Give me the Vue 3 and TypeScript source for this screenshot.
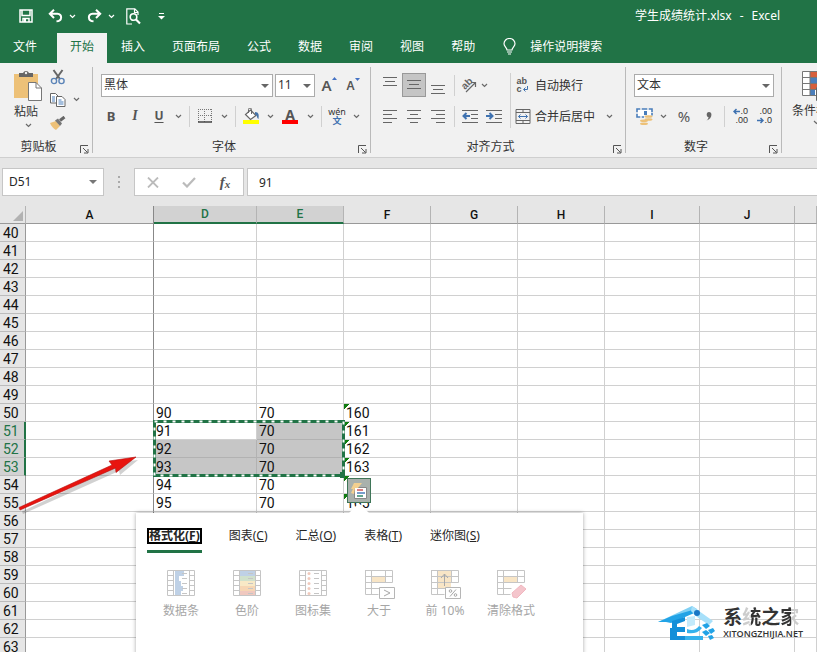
<script setup lang="ts">
import { computed, onBeforeUnmount, onMounted, ref } from 'vue'

interface Column {
  name: string
  width?: number
}

const tabs = ['文件', '开始', '插入', '页面布局', '公式', '数据', '审阅', '视图', '帮助']
const activeTab = ref('开始')

const columns: Column[] = [
  { name: 'A', width: 128 },
  { name: 'D', width: 103 },
  { name: 'E', width: 87 },
  { name: 'F', width: 87 },
  { name: 'G', width: 87 },
  { name: 'H', width: 87 },
  { name: 'I', width: 95 },
  { name: 'J', width: 95 },
  { name: '' },
]

// Only the rows that fit below the header are rendered.
const HEADER_BOTTOM = 224
const ROW_HEIGHT = 18
const viewport = ref(window.innerHeight)
const rows = computed(() =>
  Array.from({ length: Math.max(1, Math.ceil((viewport.value - HEADER_BOTTOM) / ROW_HEIGHT)) }, (_, i) => i + 40),
)
const onResize = () => {
  viewport.value = window.innerHeight
}
onMounted(() => window.addEventListener('resize', onResize))
onBeforeUnmount(() => window.removeEventListener('resize', onResize))

const fontName = ref('黑体')
const fontSize = ref('11')
const numberFormat = ref('文本')
const nameBox = ref('D51')
const formula = ref('91')

const isSelectedCol = (c: string) => c === 'D' || c === 'E'
const isSelectedRow = (r: number) => r >= 51 && r <= 53
const hasData = (r: number) => r >= 50 && r <= 55

function cellText(r: number, c: string): string {
  if (!hasData(r)) return ''
  if (c === 'D') return String(r + 40)
  if (c === 'E') return '70'
  if (c === 'F') return String(r + 110)
  return ''
}

function cellClass(r: number, c: string) {
  return {
    frozen: c === 'A',
    picked: isSelectedRow(r) && isSelectedCol(c) && !(r === 51 && c === 'D'),
    flagged: c === 'F' && hasData(r),
    anchor: r === 51 && c === 'D',
  }
}

const analysisTabs = [
  { text: '格式化', key: 'F' },
  { text: '图表', key: 'C' },
  { text: '汇总', key: 'O' },
  { text: '表格', key: 'T' },
  { text: '迷你图', key: 'S' },
]
const activeAnalysis = ref('F')

const analysisItems = ['数据条', '色阶', '图标集', '大于', '前 10%', '清除格式']
const barWidths = [9, 4, 6, 8, 6]
const scaleColors = ['#b4c9e2', '#c8dcc4', '#f7e6bd', '#f5d0a8', '#eebfb4']
</script>

<template>
  <div class="app">
    <svg class="defs" aria-hidden="true">
      <symbol id="chev" viewBox="0 0 7 5"><path d="M1 1l2.500 2.500L6 1" fill="none" stroke="currentColor" stroke-width="1.200" /></symbol>
      <symbol id="tri" viewBox="0 0 8 4"><path d="M0 0h8L4 4z" fill="currentColor" /></symbol>
      <symbol id="launch" viewBox="0 0 9 9">
        <path d="M.5 8V.5H8M3 3l4.500 4.500M8 4v4H4" fill="none" stroke="#555" />
      </symbol>
    </svg>

    <header class="titlebar">
      <div class="qat">
        <button class="q" aria-label="保存">
          <svg width="14" height="14" viewBox="0 0 14 14" fill="none" stroke="#fff" stroke-width="1.500">
            <path d="M1 1h12v12H1zM3 1v5.500h8V1M4 13V9.500h6V13" /><path d="M6 10v3" stroke-width="2" />
          </svg>
        </button>
        <button class="q undo" aria-label="撤消">
          <svg width="15" height="14" viewBox="0 0 15 14" fill="none" stroke="#fff" stroke-width="2">
            <path d="M6 .8L1.800 4.800 6 9M2 4.800h7.500c5 0 5 7.500-1 7.500" />
          </svg>
        </button>
        <button class="c" aria-label="撤消列表"><svg width="7" height="5"><use href="#chev" /></svg></button>
        <button class="q redo" aria-label="恢复">
          <svg width="15" height="14" viewBox="0 0 15 14" fill="none" stroke="#fff" stroke-width="2">
            <path d="M9 .8l4.200 4L9 9M13 4.800H5.500c-5 0-5 7.500 1 7.500" />
          </svg>
        </button>
        <button class="c" aria-label="恢复列表"><svg width="7" height="5"><use href="#chev" /></svg></button>
        <button class="q preview" aria-label="打印预览">
          <svg width="15" height="17" viewBox="0 0 15 17" fill="none" stroke="#fff">
            <path d="M6 16H.8V.8h8l3.200 3.200v3M8.500 1v3.500H12" stroke-width="1.200" />
            <circle cx="7.500" cy="9" r="3.300" stroke-width="1.600" /><path d="M10 11.500l4 4" stroke-width="2.200" />
          </svg>
        </button>
        <button class="q more" aria-label="自定义快速访问工具栏">
          <svg width="7" height="7" viewBox="0 0 7 7"><path d="M1 .5h5" stroke="#fff" /><path d="M0 3h7L3.500 6.500z" fill="#fff" /></svg>
        </button>
      </div>
      <div class="title"><span>学生成绩统计.xlsx</span><span>-</span><span>Excel</span></div>
    </header>

    <nav class="tabs">
      <button v-for="t in tabs" :key="t" class="tab" :class="{ on: t === activeTab, file: t === '文件' }" @click="activeTab = t">{{ t }}</button>
      <button class="tell">
        <svg width="13" height="17" viewBox="0 0 13 17" fill="none" stroke="#fff" stroke-width="1.200">
          <path d="M4 12c0-2.500-3-3.500-3-6.300a5.500 5.200 0 0 1 11 0C12 8.500 9 9.500 9 12zM4 14h5M5 16h3" />
        </svg>
        操作说明搜索
      </button>
    </nav>

    <section class="ribbon">
      <div class="group clip">
        <div class="clip-body">
          <button class="paste">
            <svg width="28" height="31" viewBox="0 0 28 31">
              <path d="M0 4h24v24H0z" fill="#edc178" />
              <path d="M5 7V3h4a3.200 3.200 0 0 1 6 0h4v4z" fill="#666" /><circle cx="12" cy="3" r="1.200" fill="#f1f1f1" />
              <path d="M14.500 12.500H22l5.500 5.500v12.500h-13z" fill="#fff" stroke="#777" /><path d="M22 12.500V18h5.500" fill="none" stroke="#777" />
            </svg>
            <span>粘贴</span>
            <svg class="dim" width="7" height="5"><use href="#chev" /></svg>
          </button>
          <div class="clip-side">
            <button aria-label="剪切">
              <svg width="16" height="16" viewBox="0 0 16 16" fill="none">
                <path d="M3.500 1l6.500 9M12.500 1L6 10" stroke="#666" stroke-width="2" />
                <circle cx="4" cy="12" r="2.600" stroke="#5a83b7" stroke-width="1.400" /><circle cx="11.500" cy="12" r="2.600" stroke="#5a83b7" stroke-width="1.400" />
              </svg>
            </button>
            <button aria-label="复制">
              <svg width="16" height="14" viewBox="0 0 16 14" fill="#fff" stroke="#666">
                <path d="M.5.5h5l3 3v6.500h-8z" /><path d="M6.500 3.500h5.500l3 3v7H6.500z" />
                <path d="M2 4h3M2 6h3M2 8h3M8.500 7h3M8.500 9h5M8.500 11h5" stroke="#4a7ebb" />
              </svg>
              <svg class="dim gapchev" width="7" height="5"><use href="#chev" /></svg>
            </button>
            <button aria-label="格式刷">
              <svg width="16" height="14" viewBox="0 0 16 14">
                <path d="M0 7l6-2 4 5-4 4C4 13 1 10 0 7z" fill="#edc178" /><path d="M5 4.500l3-2 4 5-2 2.500z" fill="#777" /><path d="M10 4.500L14.500 1" stroke="#666" stroke-width="3" />
              </svg>
            </button>
          </div>
        </div>
        <div class="glabel"><span>剪贴板</span><button aria-label="剪贴板选项"><svg width="9" height="9"><use href="#launch" /></svg></button></div>
      </div>

      <div class="group font">
        <div class="row">
          <label class="combo face"><select v-model="fontName" aria-label="字体"><option>黑体</option></select><svg width="8" height="4"><use href="#tri" /></svg></label>
          <label class="combo size"><select v-model="fontSize" aria-label="字号"><option>11</option></select><svg width="8" height="4"><use href="#tri" /></svg></label>
          <button class="b24 glyph grow" aria-label="增大字号">A<svg width="5" height="3" viewBox="0 0 5 3"><path d="M0 3h5L2.500 0z" fill="#4472c4" /></svg></button>
          <button class="b24 glyph shrink" aria-label="减小字号">A<svg width="5" height="3" viewBox="0 0 5 3"><path d="M0 0h5L2.500 3z" fill="#4472c4" /></svg></button>
        </div>
        <div class="row pull">
          <button class="b24 glyph bold">B</button>
          <button class="b24 glyph ital">I</button>
          <button class="b24 glyph under">U</button>
          <button class="c" aria-label="下划线样式"><svg width="7" height="5"><use href="#chev" /></svg></button>
          <i class="sep"></i>
          <button class="b24" aria-label="边框">
            <svg width="14" height="14" viewBox="0 0 14 14" fill="none" stroke="#777">
              <path d="M0 .5h14M.5 0v13M6.500 0v13M13.500 0v13M0 6.500h14" stroke-dasharray="1 1" /><path d="M0 13h14" stroke="#444" stroke-width="1.500" />
            </svg>
          </button>
          <button class="c" aria-label="边框样式"><svg width="7" height="5"><use href="#chev" /></svg></button>
          <i class="sep"></i>
          <button class="b24" aria-label="填充颜色">
            <svg width="17" height="16" viewBox="0 0 17 16">
              <path d="M0 12h16v4H0z" fill="#ff0" /><path d="M7.500 2L13 7.500 7.500 11.500 2.500 6.500z" fill="#fff" stroke="#666" stroke-width="1.200" />
              <path d="M5.500 5V1.500a1.500 1.500 0 0 1 3 0V6" fill="none" stroke="#666" /><path d="M12 4c4 0 4 3 3.500 7-2-1-1-4-3.500-4.500z" fill="#4472a8" />
            </svg>
          </button>
          <button class="c" aria-label="更多填充颜色"><svg width="7" height="5"><use href="#chev" /></svg></button>
          <button class="glyph fcolor" aria-label="字体颜色">A</button>
          <button class="c" aria-label="更多字体颜色"><svg width="7" height="5"><use href="#chev" /></svg></button>
          <i class="sep"></i>
          <button class="b24 wen"><span>wén</span><b>文</b></button>
          <button class="c" aria-label="拼音选项"><svg width="7" height="5"><use href="#chev" /></svg></button>
        </div>
        <div class="glabel"><span>字体</span><button aria-label="字体设置"><svg width="9" height="9"><use href="#launch" /></svg></button></div>
      </div>

      <div class="group align">
        <div class="align-body">
          <div class="stack">
            <div class="row">
              <button class="b24" aria-label="顶端对齐"><svg width="16" height="18" viewBox="0 0 16 18" stroke="#666"><path d="M1 1.500h14M3 5.500h10M1 9.500h14" /></svg></button>
              <button class="b24 pressed" aria-label="垂直居中"><svg width="16" height="18" viewBox="0 0 16 18" stroke="#666"><path d="M1 4.500h14M3 8.500h10M1 12.500h14" /></svg></button>
              <button class="b24" aria-label="底端对齐"><svg width="16" height="18" viewBox="0 0 16 18" stroke="#666"><path d="M1 9.500h14M3 13.500h10M1 17.500h14" /></svg></button>
              <i class="sep"></i>
              <button class="orient" aria-label="方向">
                <svg width="20" height="20" viewBox="0 0 20 20"><text x="0" y="0" transform="translate(7 15) rotate(-45)" font-size="10" font-weight="bold" fill="#666" font-family="Liberation Sans, sans-serif">ab</text><path d="M8 17l9-9M13 7.500h4.500V12" fill="none" stroke="#666" stroke-width="1.200" /></svg>
                <svg class="dim" width="7" height="5"><use href="#chev" /></svg>
              </button>
            </div>
            <div class="row">
              <button class="b24" aria-label="左对齐"><svg width="16" height="14" viewBox="0 0 16 14" stroke="#666"><path d="M1 1.500h14M1 5.500h9M1 9.500h14M1 13.500h9" /></svg></button>
              <button class="b24" aria-label="居中"><svg width="16" height="14" viewBox="0 0 16 14" stroke="#666"><path d="M1 1.500h14M4 5.500h8M1 9.500h14M4 13.500h8" /></svg></button>
              <button class="b24" aria-label="右对齐"><svg width="16" height="14" viewBox="0 0 16 14" stroke="#666"><path d="M1 1.500h14M6 5.500h9M1 9.500h14M6 13.500h9" /></svg></button>
              <i class="sep"></i>
              <button class="b24" aria-label="减少缩进"><svg width="16" height="14" viewBox="0 0 16 14" stroke="#666"><path d="M0 1.500h16M9 5.500h7M9 9.500h7M0 13.500h16" /><path d="M8 7H1.500M4.500 4l-3 3 3 3" fill="none" stroke="#3f72b0" stroke-width="2" /></svg></button>
              <button class="b24" aria-label="增加缩进"><svg width="16" height="14" viewBox="0 0 16 14" stroke="#666"><path d="M0 1.500h16M9 5.500h7M9 9.500h7M0 13.500h16" /><path d="M0 7h6.500M3.500 4l3 3-3 3" fill="none" stroke="#3f72b0" stroke-width="2" /></svg></button>
            </div>
          </div>
          <i class="sep tall"></i>
          <div class="stack">
            <button class="wide">
              <svg width="16" height="20" viewBox="0 0 16 20"><text x="2" y="9" font-size="9" font-weight="bold" fill="#555" font-family="Liberation Sans, sans-serif">ab</text><text x="2" y="17" font-size="9" font-weight="bold" fill="#555" font-family="Liberation Sans, sans-serif">c</text><path d="M13 11v3.500H9.500M11 12.500l-2 2 2 2" fill="none" stroke="#3f72b0" /></svg>
              <span>自动换行</span>
            </button>
            <button class="wide">
              <svg width="16" height="15" viewBox="0 0 16 15" fill="none" stroke="#666"><path d="M1.500.500h14v14h-14zM1.500 3.500h14M1.500 11.500h14M8.500.5v3M8.500 11.500v3" /><path d="M4 7.500h9M6 5.500l-2 2 2 2M11 5.500l2 2-2 2" stroke="#3f72b0" /></svg>
              <span>合并后居中</span>
              <svg class="dim end" width="7" height="5"><use href="#chev" /></svg>
            </button>
          </div>
        </div>
        <div class="glabel"><span>对齐方式</span><button aria-label="对齐设置"><svg width="9" height="9"><use href="#launch" /></svg></button></div>
      </div>

      <div class="group number">
        <div class="row">
          <label class="combo numfmt"><select v-model="numberFormat" aria-label="数字格式"><option>文本</option></select><svg width="8" height="4"><use href="#tri" /></svg></label>
        </div>
        <div class="row">
          <button class="money" aria-label="会计数字格式">
            <svg width="18" height="17" viewBox="0 0 18 17">
              <path d="M1 1h15v8H1z" fill="#fff" stroke="#4a7ebb" stroke-width="1.600" /><path d="M8 3h3v4H8z" fill="#4a7ebb" />
              <path d="M4 1h2M11 1h2M4 9h2M1 4v2M16 4v1" stroke="#f1f1f1" stroke-width="1.600" />
              <path d="M8 7.500h9V13h-5v4H4v-6h4z" fill="#f1f1f1" />
              <ellipse cx="12.500" cy="8.500" rx="4" ry="1.300" fill="#edc178" /><ellipse cx="12.500" cy="11.500" rx="4" ry="1.300" fill="#edc178" /><ellipse cx="8" cy="12.800" rx="4" ry="1.300" fill="#edc178" /><ellipse cx="8" cy="15.700" rx="4" ry="1.300" fill="#edc178" />
            </svg>
          </button>
          <button class="c" aria-label="货币"><svg width="7" height="5"><use href="#chev" /></svg></button>
          <button class="b24 glyph pct">%</button>
          <button class="b24 comma" aria-label="千位分隔样式"><svg width="6" height="9" viewBox="0 0 6 9"><path d="M3 0c4 0 3 7-2.500 8.500C2 7.500 2.500 6 2.500 5 0 5 0 0 3 0z" fill="#666" /></svg></button>
          <i class="sep"></i>
          <button class="dec" aria-label="增加小数位数"><span><svg width="7" height="7" viewBox="0 0 7 7"><path d="M7 3.500H1M3.500 1L1 3.500 3.500 6" fill="none" stroke="#3f72b0" stroke-width="1.500" /></svg>.0</span><span>.00</span></button>
          <button class="dec" aria-label="减少小数位数"><span>.00</span><span><svg width="7" height="7" viewBox="0 0 7 7"><path d="M0 3.500h6M3.500 1L6 3.500 3.500 6" fill="none" stroke="#3f72b0" stroke-width="1.500" /></svg>.0</span></button>
        </div>
        <div class="glabel"><span>数字</span><button aria-label="数字设置"><svg width="9" height="9"><use href="#launch" /></svg></button></div>
      </div>

      <div class="group styles">
        <button class="cond">
          <svg width="28" height="31" viewBox="0 0 28 31">
            <path d="M.5.500h27v24H.5z" fill="#fff" /><path d="M8 0h12v6H8zM8 12h14v6H8z" fill="#d65f3c" /><path d="M8 6h16v6H8zM8 18h5v6H8z" fill="#4a7ebb" />
            <path d="M.5.500h27v24H.5zM8 0v24M.5 6.500h27M.5 12.500h27M.5 18.500h27" fill="none" stroke="#777" />
            <path d="M14.500 16.500h13v13h-13z" fill="#fff" stroke="#666" />
          </svg>
          <span>条件格式</span>
          <svg class="dim" width="7" height="5"><use href="#chev" /></svg>
        </button>
      </div>
    </section>

    <section class="fbar">
      <div class="namebox">
        <input v-model="nameBox" aria-label="名称框" />
        <button aria-label="名称列表"><svg width="8" height="4"><use href="#tri" /></svg></button>
      </div>
      <svg class="grip" width="2" height="12" viewBox="0 0 2 12" fill="#aaa"><path d="M0 0h2v2H0zM0 5h2v2H0zM0 10h2v2H0z" /></svg>
      <div class="fbuttons">
        <button aria-label="取消"><svg width="12" height="11" viewBox="0 0 12 11"><path d="M1 .5l10 10M11 .5l-10 10" stroke="#bbb" stroke-width="1.800" /></svg></button>
        <button aria-label="输入"><svg width="14" height="11" viewBox="0 0 14 11"><path d="M1 5.500l4 4L13 1" fill="none" stroke="#bbb" stroke-width="2.200" /></svg></button>
        <button class="fx" aria-label="插入函数">f<small>x</small></button>
      </div>
      <input v-model="formula" class="formula" aria-label="编辑栏" />
    </section>

    <main class="sheet">
      <table>
        <colgroup>
          <col class="rowcol" />
          <col v-for="(c, i) in columns" :key="i" :style="c.width ? { width: c.width + 'px' } : undefined" />
        </colgroup>
        <thead>
          <tr>
            <th class="corner"><svg width="10" height="10" viewBox="0 0 10 10"><path d="M10 0v10H0z" fill="#b2b2b2" /></svg></th>
            <th v-for="(c, i) in columns" :key="i" :class="{ sel: isSelectedCol(c.name), frozen: c.name === 'A' }">{{ c.name }}</th>
          </tr>
        </thead>
        <tbody>
          <tr v-for="r in rows" :key="r">
            <th :class="{ sel: isSelectedRow(r) }">{{ r }}</th>
            <td v-for="(c, i) in columns" :key="i" :class="cellClass(r, c.name)">
              {{ cellText(r, c.name) }}
              <svg v-if="r === 51 && c.name === 'D'" class="ants" width="192" height="58" viewBox="0 0 192 58" fill="none">
                <path d="M1.500 1.500h189v54h-189z" stroke="#217346" stroke-width="3" />
                <path d="M1.500 1.500h189v54h-189z" stroke="#fff" stroke-width="2" stroke-dasharray="3 6" />
                <path d="M187 52h5v6h-5z" fill="#217346" />
              </svg>
            </td>
          </tr>
        </tbody>
      </table>

      <svg class="arrow" width="124" height="66" viewBox="0 0 124 66">
        <g transform="translate(3 3)" fill="#000"><path d="M1 52.500L94 8l-3-4 26-3-18 15-1-4L2 55z" opacity=".18" /></g>
        <path d="M1 51.500L94 9l-3-4 27-4L98 16.500l-.5-4.500L2 54z" fill="#e8140f" stroke="#b30d0d" stroke-width=".6" />
      </svg>

      <section class="popup">
        <svg class="callout" width="22" height="10" viewBox="0 0 22 10"><path d="M0 10L9 1q2-2 4 0l9 9z" fill="#fff" /></svg>
        <div class="ptabs">
          <button v-for="t in analysisTabs" :key="t.key" :class="{ on: t.key === activeAnalysis }" @click="activeAnalysis = t.key">
            <span>{{ t.text }}(<u>{{ t.key }}</u>)</span>
          </button>
        </div>
        <div class="pitems">
          <button v-for="(item, k) in analysisItems" :key="item">
            <svg width="32" height="32" viewBox="0 0 32 32" fill="none" stroke="#bcbcbc">
              <template v-if="k < 3">
                <template v-if="k === 0"><path v-for="(w, n) in barWidths" :key="n" :d="`M10 ${4 + n * 5}h${w}v5h-${w}z`" fill="#b4c9e2" stroke="none" /></template>
                <template v-if="k === 1"><path v-for="(s, n) in scaleColors" :key="n" :d="`M9 ${4 + n * 5}h15v5h-15z`" :fill="s" stroke="none" /></template>
                <template v-if="k === 2"><circle v-for="n in 5" :key="n" cx="12" :cy="1.500 + n * 5" r="1.500" fill="#eec0b0" stroke="none" /></template>
                <path d="M2.500 3.500h27v25h-27zM8.500 3.500v25M24.500 3.500v25" />
                <path d="M2.500 8.500h6M2.500 13.500h6M2.500 18.500h6M2.500 23.500h6M24.500 8.500h5M24.500 13.500h5M24.500 18.500h5M24.500 23.500h5M17 6.500h5M17 11.500h5M17 16.500h5M17 21.500h5M17 26.500h5" />
              </template>
              <template v-else>
                <path v-if="k === 4" d="M9 3h13v19H9z" fill="#f7e1bd" stroke="none" />
                <path v-else d="M9 9h13v7H9z" fill="#f7e1bd" stroke="none" />
                <path d="M2.500 3.500h27v12M2.500 3v24.500h13M2.500 9.500h27M2.500 15.500h27M2.500 21.500h14M8.500 3.500v24M22.500 3.500v12" />
                <path v-if="k < 5" d="M16.500 20.500h15v11h-15z" fill="#fff" stroke="#aaa" />
                <path v-if="k === 3" d="M21 23l6 3-6 3" stroke="#999" />
                <g v-if="k === 4" stroke="#999"><path d="M15.500 19V7M12 11l3.500-4 3.500 4" /><circle cx="21.500" cy="24" r="1.300" /><circle cx="26.500" cy="28" r="1.300" /><path d="M27 22.500l-6 7" /></g>
                <path v-if="k === 5" d="M17 26L26 18l5 4-9 9-4-1z" fill="#f3bcc4" stroke="#eeaab4" />
              </template>
            </svg>
            <span>{{ item }}</span>
          </button>
        </div>
      </section>

      <button class="quick" aria-label="快速分析">
        <svg width="18" height="17" viewBox="0 0 18 17">
          <path d="M4.500 5.500h12v11h-12z" fill="#fff" stroke="#888" /><path d="M7 8h6" stroke="#c55" stroke-width="1.500" /><path d="M7 11h8" stroke="#4a7ebb" stroke-width="1.500" /><path d="M7 14h6" stroke="#2f8a68" stroke-width="1.500" />
          <path d="M4 1h8L8 6H5l-1 6-3-1L3 7H1z" fill="#f3d08f" />
        </svg>
      </button>

      <div class="mark">
        <svg width="60" height="38" viewBox="0 0 60 38">
          <path d="M1 18L35 2l5 3-22 12z" fill="#7fd0f4" /><path d="M1 18l14-6 24-7 3 2-28 12-5-1z" fill="#22a3e6" /><path d="M35 2l21 15-4 4-12-8-6-6z" fill="#a7e0fa" />
          <circle cx="40" cy="9" r="3" fill="#1976c5" />
          <path d="M15 17l13-4v4l-8 3v3h8v5h-8v4h8v4H13V24h2z" fill="#128fd9" />
          <path d="M30 13l8-1v9l-8 2z" fill="#c3eafb" /><path d="M30 25c5 2 9 1 12-3l3 2c-4 5-9 6-15 5zM28 32h18v4H28z" fill="#36b2ec" />
          <path d="M45 21l5-2 3 3-4 3zM51 26l5-2 2 3-4 3zM45 28l4-2 4 3-4 3zM51 32l4-1 2 3-4 2z" fill="#22a3e6" />
        </svg>
        <div class="mark-text">
          <strong>系<em>统</em>之<em class="last">家</em></strong>
          <span>XITONGZHIJIA.NET</span>
        </div>
      </div>
    </main>
  </div>
</template>

<style>
body {
  overflow: hidden;
}
</style>

<style scoped>
.app {
  height: 100vh;
  display: flex;
  flex-direction: column;
  overflow: hidden;
  background: #e6e6e6;
  color: #262626;
  font: 12px/16px "Noto Sans", "Noto Sans CJK SC", sans-serif;
}
.app * {
  box-sizing: border-box;
}
.defs {
  position: absolute;
  width: 0;
  height: 0;
}
svg {
  display: block;
  flex: none;
}
button,
input,
select {
  font: inherit;
  color: inherit;
  background: none;
  border: 0;
  border-radius: 0;
  padding: 0;
  margin: 0;
  outline: 0;
}
button {
  display: flex;
  align-items: center;
  justify-content: center;
  flex: none;
  white-space: nowrap;
}

.titlebar {
  flex: none;
  height: 32px;
  display: flex;
  align-items: center;
  justify-content: space-between;
  background: #217346;
  color: #fff;
  padding: 0 37px 0 16px;
}
.title {
  display: flex;
  gap: 8px;
}
.qat {
  display: flex;
  align-items: center;
}
.q {
  width: 20px;
  height: 24px;
}
.c {
  width: 14px;
  height: 24px;
}
.ribbon .c,
.dim {
  color: #6a6a6a;
}
.undo {
  margin-left: 9px;
}
.redo {
  margin-left: 5px;
}
.preview {
  margin-left: 5px;
}
.more {
  margin-left: 8px;
}

.tabs {
  flex: none;
  height: 31px;
  display: flex;
  gap: 1px;
  background: #217346;
  color: #fff;
}
.tab {
  padding: 0 13px 2px;
}
.tab.file {
  margin-right: 6px;
}
.tab.on {
  margin-top: 1px;
  background: #f1f1f1;
  color: #217346;
}
.tell {
  gap: 14px;
  padding: 0 0 2px 14px;
}

.ribbon {
  flex: none;
  height: 95px;
  display: flex;
  overflow: hidden;
  background: #f1f1f1;
  border-bottom: 1px solid #cfcfcf;
  color: #333;
}
.group {
  position: relative;
  flex: none;
  display: flex;
  flex-direction: column;
  padding: 10px 0 0 8px;
}
.group:not(.styles)::after {
  content: "";
  position: absolute;
  right: 0;
  top: 4px;
  bottom: 4px;
  width: 1px;
  background: #bababa;
}
.clip {
  width: 93px;
}
.font {
  width: 278px;
}
.align {
  width: 255px;
  padding-left: 7px;
}
.number {
  width: 156px;
}
.row {
  height: 24px;
  display: flex;
  align-items: center;
}
.row + .row {
  margin-top: 7px;
}
.pull {
  margin-left: -2px;
}
.glabel {
  margin: auto 1px 2px -8px;
  height: 16px;
  display: flex;
  align-items: center;
  color: #333;
}
.align .glabel {
  margin-left: -7px;
}
.glabel span {
  flex: 1;
  text-align: center;
}
.glabel button {
  width: 15px;
  height: 12px;
  align-self: flex-end;
}
.b24 {
  width: 24px;
  height: 24px;
}
.sep {
  width: 8px;
  height: 21px;
  flex: none;
  background: linear-gradient(#d0d0d0, #d0d0d0) center / 1px 100% no-repeat;
}
.sep.tall {
  height: 55px;
}
.clip-body {
  display: flex;
  height: 58px;
}
.paste {
  flex-direction: column;
  width: 40px;
  margin-top: -3px;
  gap: 3px;
  justify-content: flex-start;
}
.paste span {
  height: 16px;
  margin-right: 4px;
}
.clip-side {
  display: flex;
  flex-direction: column;
  gap: 8px;
  margin: -4px 0 0 2px;
}
.clip-side button {
  justify-content: flex-start;
  height: 15px;
}
.gapchev {
  margin-left: 7px;
}
.combo {
  position: relative;
  height: 23px;
  flex: none;
}
.combo select {
  appearance: none;
  width: 100%;
  height: 100%;
  border: 1px solid #ababab;
  background: #fff;
  padding: 0 2px;
}
.combo svg {
  position: absolute;
  right: 4px;
  top: 10px;
  color: #666;
  pointer-events: none;
}
.face {
  width: 172px;
}
.size {
  width: 40px;
  margin: 0 2px;
}
.numfmt {
  width: 140px;
}
.glyph {
  color: #555;
  font-weight: 700;
}
.grow,
.shrink {
  align-items: flex-start;
  padding-top: 4px;
  font-size: 15px;
  font-weight: 600;
}
.shrink {
  font-size: 12px;
  padding-top: 5px;
}
.bold {
  font-size: 13px;
}
.ital {
  font: italic 700 14px/16px "Liberation Serif", serif;
}
.under {
  text-decoration: underline;
  text-underline-offset: 2px;
}
.fcolor {
  width: 16px;
  height: 15px;
  margin: 0 5px;
  border-bottom: 4px solid #f00;
  font-size: 14px;
  line-height: 11px;
}
.wen {
  flex-direction: column;
  font-size: 9px;
  line-height: 9px;
}
.wen b {
  color: #3f72b0;
}
.align-body {
  display: flex;
}
.stack {
  display: flex;
  flex-direction: column;
}
.pressed {
  background: #c5c5c5;
  border: 1px solid #999;
}
.pressed svg {
  margin: 0 -1px;
}
.orient {
  width: 48px;
  height: 24px;
  justify-content: flex-start;
  gap: 3px;
}
.wide {
  height: 24px;
  gap: 4px;
  justify-content: flex-start;
}
.wide span {
  padding-top: 1px;
}
.wide > svg:first-child {
  width: 17px;
}
.wide + .wide {
  margin-top: 7px;
}
.wide .end {
  margin-left: 7px;
}
.money {
  width: 22px;
  height: 24px;
}
.pct {
  font-size: 15px;
  font-weight: 400;
  width: 28px;
}
.comma {
  width: 22px;
}
.dec {
  width: 24px;
  flex-direction: column;
  align-items: flex-end;
  padding-right: 4px;
  font: 9px/9px "Liberation Sans", sans-serif;
}
.dec span {
  display: flex;
  align-items: center;
}
.styles {
  flex: 1 0 60px;
  align-items: flex-start;
  padding: 8px 0 0 10px;
}
.cond {
  flex-direction: column;
  gap: 1px;
}

.fbar {
  flex: none;
  height: 48px;
  display: flex;
  align-items: center;
  padding: 0 0 0 2px;
}
.namebox,
.fbuttons,
.formula {
  height: 28px;
  background: #fff;
  border: 1px solid #c6c6c6;
}
.namebox {
  width: 102px;
  display: flex;
  padding: 0 6px;
}
.namebox input {
  flex: 1;
  min-width: 0;
}
.namebox button {
  color: #777;
}
.grip {
  margin: 0 14px;
}
.fbuttons {
  width: 110px;
  display: flex;
}
.fbuttons button {
  flex: 1;
}
.fbuttons .fx {
  font: italic 700 15px/20px "Liberation Serif", serif;
  color: #555;
}
.fx small {
  font-size: 11px;
  padding-top: 4px;
}
.formula {
  flex: 1;
  min-width: 0;
  margin-left: 3px;
  border-right: 0;
  padding: 0 11px;
}

.sheet {
  position: relative;
  flex: 1;
  min-height: 0;
  overflow: hidden;
  background: #fff;
}
table {
  width: 100%;
  table-layout: fixed;
  border-collapse: separate;
  border-spacing: 0;
  font: 14px/17px Roboto, sans-serif;
  color: #111;
}
.rowcol {
  width: 26px;
}
th,
td {
  height: 18px;
  padding: 0;
  font-weight: 400;
  white-space: nowrap;
  border-right: 1px solid #d0d0d0;
  border-bottom: 1px solid #d0d0d0;
}
tbody th,
tbody td {
  line-height: 16px;
  padding-top: 1px;
}
thead th {
  line-height: 16px;
  font-size: 12px;
  font-weight: 500;
  background: #e6e6e6;
  padding-top: 1px;
  border-right-color: #b4b4b4;
  border-bottom-color: #999;
}
thead th.sel {
  background: #d2d2d2;
  color: #217346;
  padding-top: 0;
  border-bottom: 2px solid #217346;
}
.corner svg {
  margin: 2px 2px 0 auto;
}
th.frozen,
td.frozen {
  border-right-color: #888;
}
tbody th {
  background: #e6e6e6;
  text-align: left;
  padding-left: 3px;
  border-right-color: #999;
  border-bottom-color: #bcbcbc;
}
tbody th.sel {
  background: #d2d2d2;
  color: #217346;
  border-right: 2px solid #217346;
}
tbody td {
  padding-left: 2px;
}
td.picked {
  background: #c6c6c6;
  border-color: #b2b2b2;
}
td.flagged {
  background: linear-gradient(135deg, #107c10 4px, transparent 4px);
}
td.anchor {
  position: relative;
}
.ants {
  position: absolute;
  left: -1px;
  top: -2px;
  z-index: 1;
}

.arrow {
  position: absolute;
  left: 18px;
  top: 250px;
}
.quick {
  position: absolute;
  left: 347px;
  top: 272px;
  width: 24px;
  height: 25px;
  background: #a9b1ac;
  border: 1px solid #3f7558;
}
.popup {
  position: absolute;
  left: 136px;
  top: 307px;
  width: 447px;
  height: 180px;
  padding: 14px 11px;
  background: #fff;
  box-shadow: 0 0 4px rgba(0, 0, 0, 0.35);
}
.callout {
  position: absolute;
  left: 212px;
  top: -9px;
}
.ptabs {
  display: flex;
  gap: 26px;
}
.ptabs button {
  height: 26px;
  align-items: flex-start;
  border-bottom: 3px solid transparent;
}
.ptabs button.on {
  font-weight: 700;
  border-bottom-color: #217346;
}
.ptabs span {
  margin-top: 1px;
  padding: 0 1px;
  line-height: 16px;
}
.ptabs .on span {
  padding: 0 2px;
  outline: 2px solid #000;
  outline-offset: -2px;
}
.pitems {
  display: flex;
  margin: 14px 0 0 1px;
}
.pitems button {
  width: 66px;
  flex-direction: column;
  gap: 4px;
  color: #a6a6a6;
}
.pitems svg {
  opacity: 0.85;
}

.mark {
  position: absolute;
  right: 14px;
  top: 398px;
  display: flex;
  align-items: flex-start;
  gap: 6px;
}
.mark-text {
  display: flex;
  flex-direction: column;
}
.mark strong {
  font: 700 19px/24px "Noto Sans CJK SC", sans-serif;
  color: #333;
}
.mark em {
  font-style: normal;
  color: transparent;
  background: linear-gradient(90deg, #ccc 50%, #333 50%);
  background-clip: text;
}
.mark em.last {
  background: linear-gradient(90deg, #333 60%, #ccc 60%);
  background-clip: text;
}
.mark span {
  font: 600 9px/12px "Open Sans", sans-serif;
  color: #333;
}
</style>
